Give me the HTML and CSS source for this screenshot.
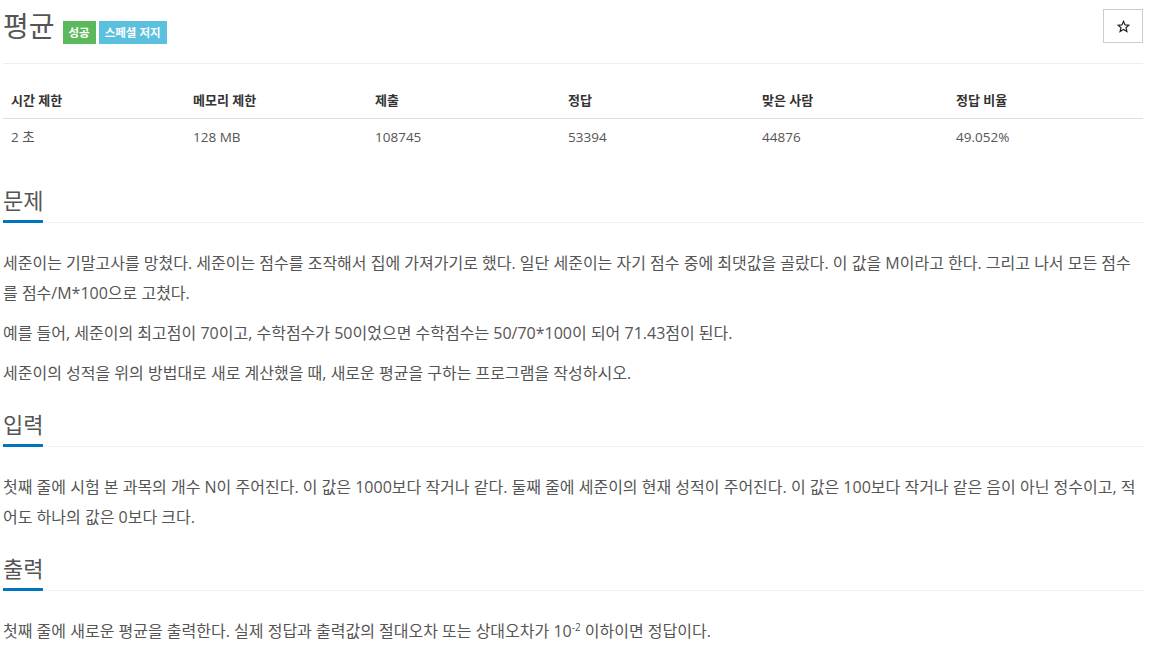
FILE: index.html
```html
<!DOCTYPE html>
<html lang="ko">
<head>
<meta charset="utf-8">
<title>평균</title>
<link rel="stylesheet" href="styles.css">
</head>
<body>
<div class="page">
  <div class="page-header">
    <div class="title-wrap">
      <h1 class="title">평균</h1>
      <span class="label label-success">성공</span>
      <span class="label label-info">스페셜 저지</span>
    </div>
    <button class="star-btn" type="button" aria-label="즐겨찾기">
      <svg width="13" height="13" viewBox="0 0 24 24"><polygon points="12,2.5 14.9,9.1 22,9.6 16.6,14.3 18.3,21.3 12,17.5 5.7,21.3 7.4,14.3 2,9.6 9.1,9.1" fill="none" stroke="#222" stroke-width="2.2" stroke-linejoin="miter"/></svg>
    </button>
  </div>

  <table class="info-table">
    <colgroup>
      <col class="c1"><col class="c2"><col class="c3"><col class="c4"><col class="c5"><col class="c6">
    </colgroup>
    <thead>
      <tr><th>시간 제한</th><th>메모리 제한</th><th>제출</th><th>정답</th><th>맞은 사람</th><th>정답 비율</th></tr>
    </thead>
    <tbody>
      <tr><td>2 초</td><td>128 MB</td><td>108745</td><td>53394</td><td>44876</td><td>49.052%</td></tr>
    </tbody>
  </table>

  <section class="section first">
    <div class="headline"><h2>문제</h2></div>
    <p>세준이는 기말고사를 망쳤다. 세준이는 점수를 조작해서 집에 가져가기로 했다. 일단 세준이는 자기 점수 중에 최댓값을 골랐다. 이 값을 M이라고 한다. 그리고 나서 모든 점수를 점수/M*100으로 고쳤다.</p>
    <p>예를 들어, 세준이의 최고점이 70이고, 수학점수가 50이었으면 수학점수는 50/70*100이 되어 71.43점이 된다.</p>
    <p>세준이의 성적을 위의 방법대로 새로 계산했을 때, 새로운 평균을 구하는 프로그램을 작성하시오.</p>
  </section>

  <section class="section">
    <div class="headline"><h2>입력</h2></div>
    <p>첫째 줄에 시험 본 과목의 개수 N이 주어진다. 이 값은 1000보다 작거나 같다. 둘째 줄에 세준이의 현재 성적이 주어진다. 이 값은 100보다 작거나 같은 음이 아닌 정수이고, 적어도 하나의 값은 0보다 크다.</p>
  </section>

  <section class="section">
    <div class="headline"><h2>출력</h2></div>
    <p>첫째 줄에 새로운 평균을 출력한다. 실제 정답과 출력값의 절대오차 또는 상대오차가 10<sup>-2</sup> 이하이면 정답이다.</p>
  </section>
</div>
</body>
</html>
```

FILE: styles.css
```css
* { box-sizing: border-box; }

html, body {
  margin: 0;
  padding: 0;
  background: #fff;
}

body {
  font-family: "Open Sans", "Noto Sans CJK KR", sans-serif;
  color: #555;
  font-size: 16px;
}

.page {
  width: 1140px;
  margin-left: 3px;
}

.page-header {
  display: flex;
  justify-content: space-between;
  align-items: flex-start;
  padding-top: 9px;
  height: 64px;
  border-bottom: 1px solid #eee;
}

.title-wrap {
  display: flex;
  align-items: flex-start;
}

.title {
  margin: 0;
  font-size: 28px;
  line-height: 34px;
  font-weight: 400;
  color: #555;
}

.label {
  display: inline-block;
  margin-top: 12px;
  height: 23px;
  line-height: 23px;
  padding: 0 6px;
  font-size: 11.5px;
  font-weight: 700;
  color: #fff;
}

.label-success {
  margin-left: 8px;
  background: #5cb85c;
}

.label-info {
  margin-left: 3px;
  background: #5bc0de;
}

.star-btn {
  width: 40px;
  height: 34px;
  padding: 0;
  margin: 0;
  background: #fff;
  border: 1px solid #ccc;
  display: flex;
  align-items: center;
  justify-content: center;
}

.info-table {
  width: 1140px;
  table-layout: fixed;
  border-collapse: collapse;
  margin-top: 18px;
  font-size: 13.5px;
}

.c1 { width: 182px; }
.c2 { width: 182px; }
.c3 { width: 193px; }
.c4 { width: 194px; }
.c5 { width: 194px; }
.c6 { width: 195px; }

.info-table th,
.info-table td {
  text-align: left;
  padding: 8px;
  line-height: 20px;
  height: 36px;
}

.info-table th {
  font-size: 13px;
  font-weight: 700;
  color: #333;
  border-bottom: 1px solid #ddd;
}

.info-table td {
  color: #555;
}

.section {
  margin-top: 23px;
}

.section.first {
  margin-top: 32px;
}

.headline {
  display: flex;
  border-bottom: 1px dotted #e2e2e2;
  margin-bottom: 25px;
}

.headline h2 {
  margin: 0 0 -1px 0;
  font-size: 22px;
  line-height: 26px;
  font-weight: 400;
  color: #555;
  padding-bottom: 7px;
  border-bottom: 3px solid #0076c0;
}

.section p {
  margin: 0 0 10px 0;
  line-height: 30px;
  font-size: 16px;
}

sup {
  font-size: 10px;
  line-height: 0;
}
```
